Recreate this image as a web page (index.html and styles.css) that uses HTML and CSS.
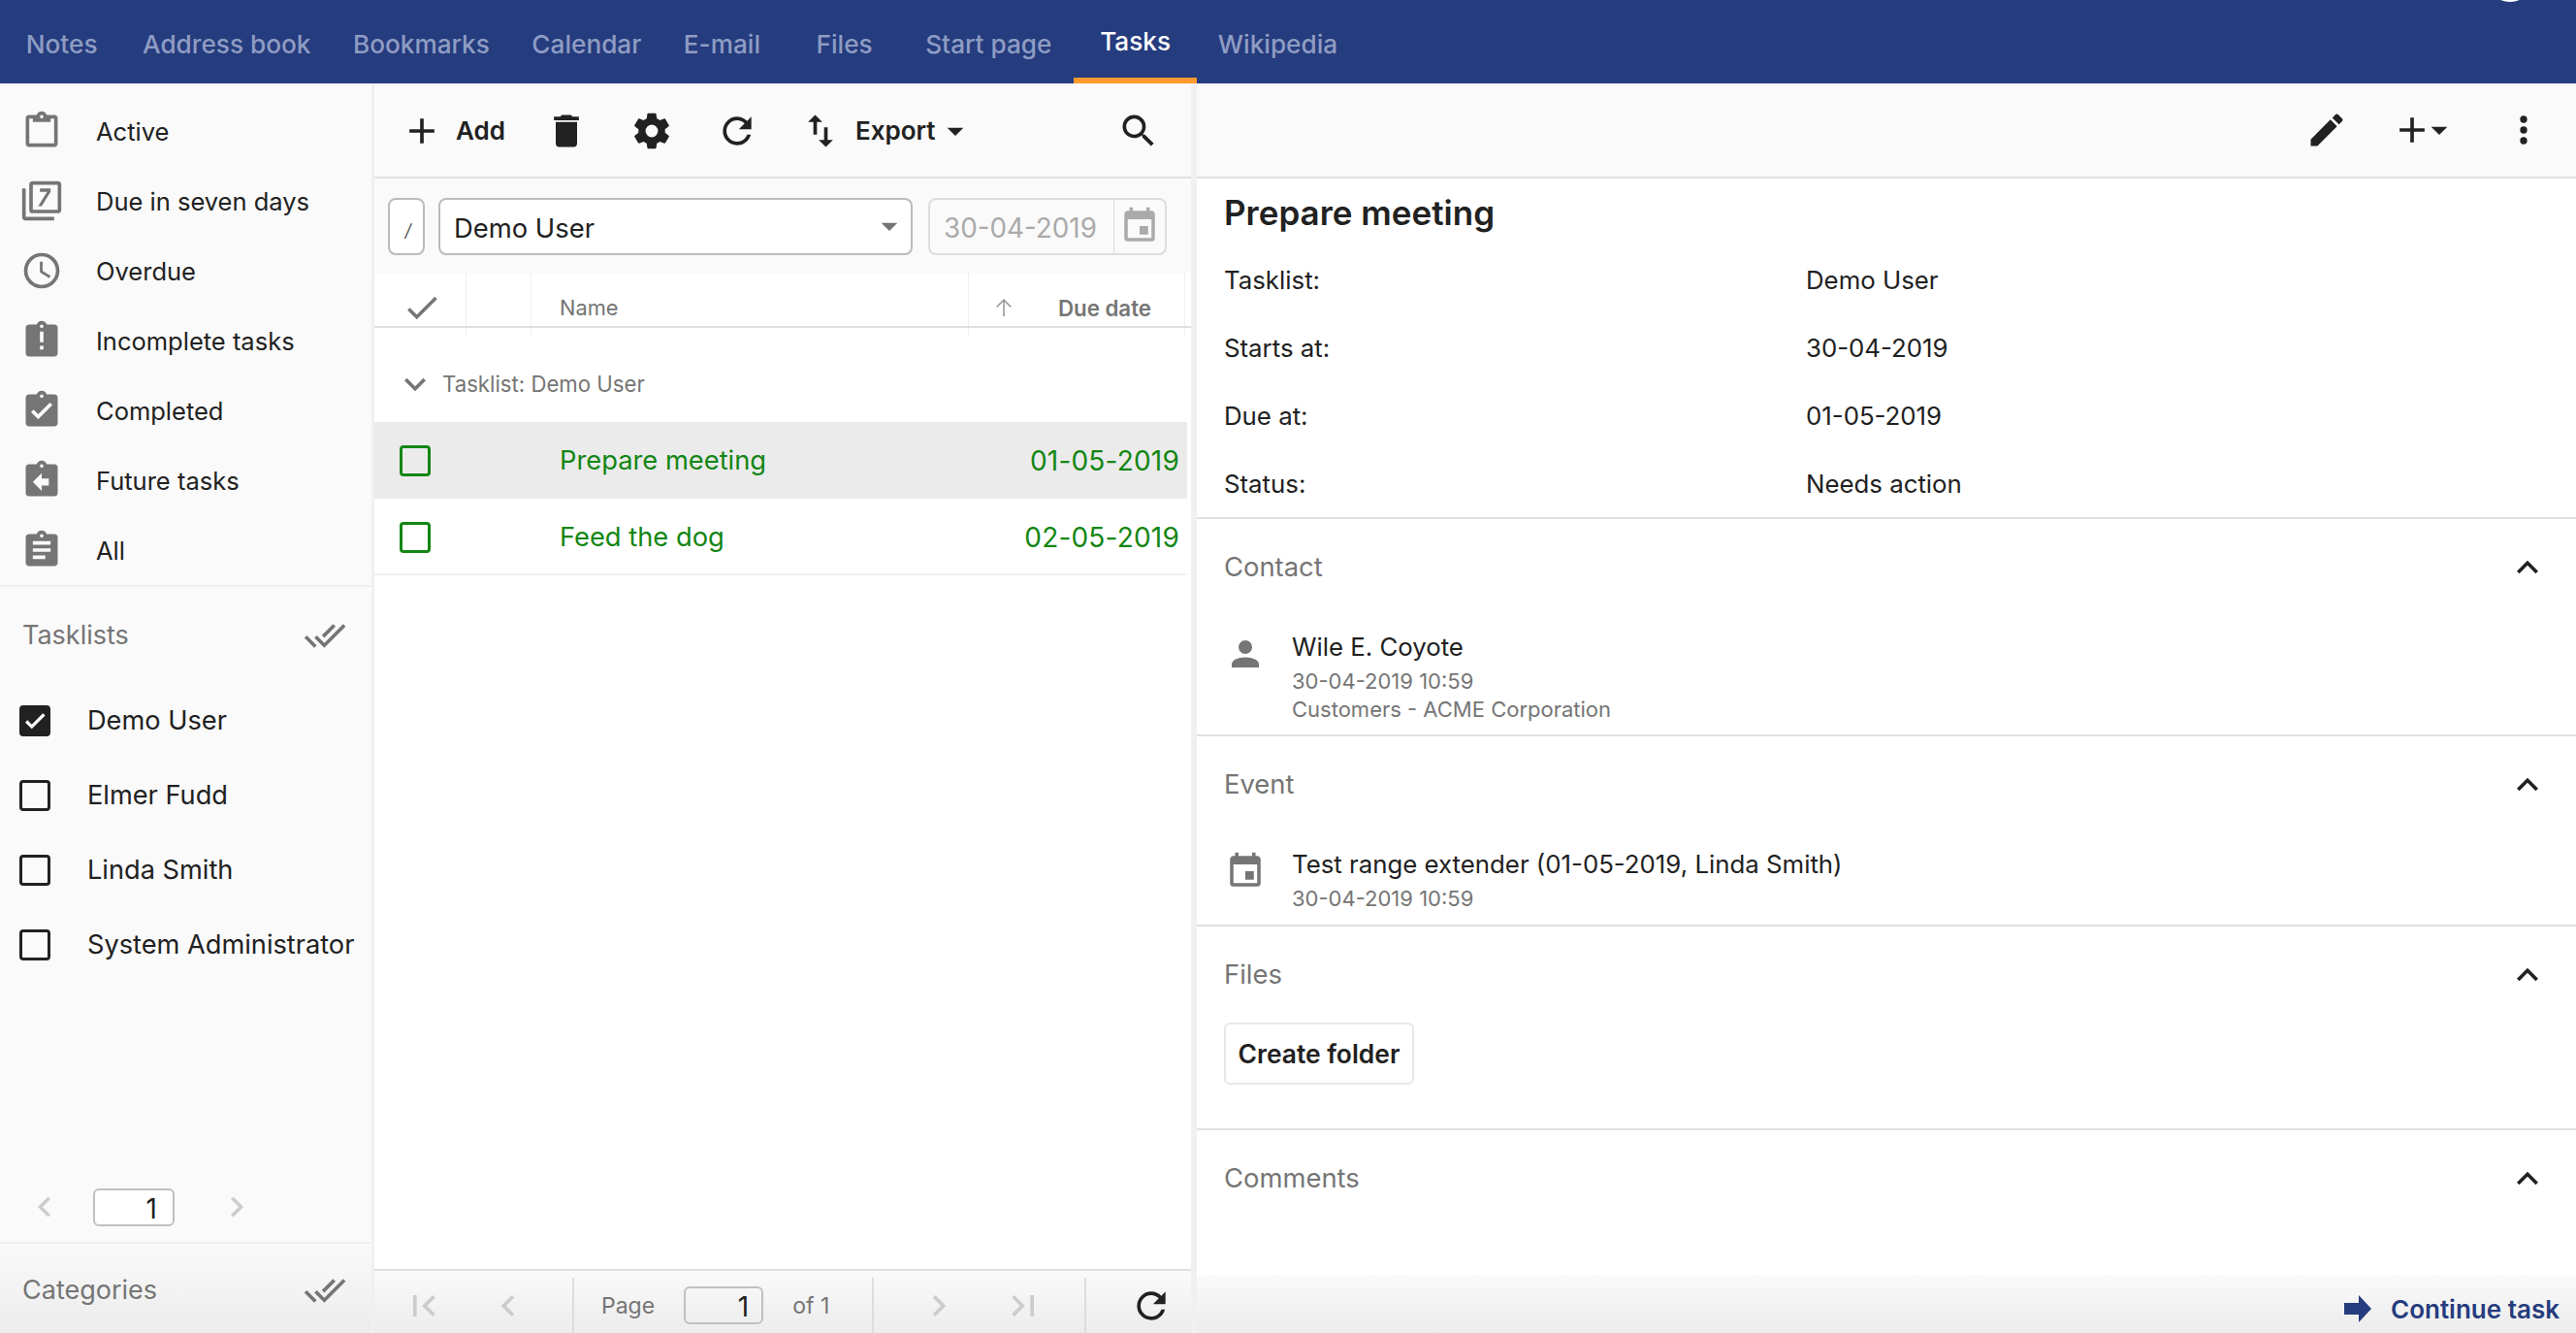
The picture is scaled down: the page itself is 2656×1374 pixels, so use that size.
FILE: index.html
```html
<!DOCTYPE html>
<html lang="en">
<head>
  <meta charset="UTF-8" />
  <title>Tasks</title>
  <link rel="stylesheet" href="styles.css">
</head>
<body>
  <!-- Icon set -->
  <svg class="defs" xmlns="http://www.w3.org/2000/svg">
    <symbol id="i-clip" viewBox="0 0 24 24"><path d="M19,3H14.82C14.4,1.84 13.3,1 12,1C10.7,1 9.6,1.84 9.18,3H5A2,2 0 0,0 3,5V19A2,2 0 0,0 5,21H19A2,2 0 0,0 21,19V5A2,2 0 0,0 19,3M12,3A1,1 0 0,1 13,4A1,1 0 0,1 12,5A1,1 0 0,1 11,4A1,1 0 0,1 12,3M7,7H17V5H19V19H5V5H7V7Z"/></symbol>
    <symbol id="i-seven" viewBox="0 0 24 24"><path d="M21,17V3H7V17H21M21,1A2,2 0 0,1 23,3V17A2,2 0 0,1 21,19H7A2,2 0 0,1 5,17V3A2,2 0 0,1 7,1H21M3,5V21H19V23H3A2,2 0 0,1 1,21V5H3M12,15L17,7V5H11V7H15L10,15H12Z"/></symbol>
    <symbol id="i-clock" viewBox="0 0 24 24"><path d="M12,2A10,10 0 0,0 2,12A10,10 0 0,0 12,22A10,10 0 0,0 22,12A10,10 0 0,0 12,2M12,20A8,8 0 1,1 20,12A8,8 0 0,1 12,20M12.5,7H11V13L16.2,16.2L17,14.9L12.5,12.2V7Z"/></symbol>
    <symbol id="i-clip-alert" viewBox="0 0 24 24"><path d="M19,3H14.82C14.4,1.84 13.3,1 12,1C10.7,1 9.6,1.84 9.18,3H5A2,2 0 0,0 3,5V19A2,2 0 0,0 5,21H19A2,2 0 0,0 21,19V5A2,2 0 0,0 19,3M13,17H11V15H13V17M13,13H11V7H13V13M12,5A1,1 0 0,1 11,4A1,1 0 0,1 12,3A1,1 0 0,1 13,4A1,1 0 0,1 12,5Z"/></symbol>
    <symbol id="i-clip-check" viewBox="0 0 24 24"><path d="M19,3H14.82C14.4,1.84 13.3,1 12,1C10.7,1 9.6,1.84 9.18,3H5A2,2 0 0,0 3,5V19A2,2 0 0,0 5,21H19A2,2 0 0,0 21,19V5A2,2 0 0,0 19,3M10,17L6,13L7.41,11.59L10,14.17L16.59,7.58L18,9L10,17M12,3A1,1 0 0,1 13,4A1,1 0 0,1 12,5A1,1 0 0,1 11,4A1,1 0 0,1 12,3Z"/></symbol>
    <symbol id="i-clip-left" viewBox="0 0 24 24"><path d="M19,3H14.82C14.4,1.84 13.3,1 12,1C10.7,1 9.6,1.84 9.18,3H5A2,2 0 0,0 3,5V19A2,2 0 0,0 5,21H19A2,2 0 0,0 21,19V5A2,2 0 0,0 19,3M16,15H12V18L7,13L12,8V11H16V15M12,3A1,1 0 0,1 13,4A1,1 0 0,1 12,5A1,1 0 0,1 11,4A1,1 0 0,1 12,3Z"/></symbol>
    <symbol id="i-clip-text" viewBox="0 0 24 24"><path d="M19,3H14.82C14.4,1.84 13.3,1 12,1C10.7,1 9.6,1.84 9.18,3H5A2,2 0 0,0 3,5V19A2,2 0 0,0 5,21H19A2,2 0 0,0 21,19V5A2,2 0 0,0 19,3M17,9H7V7H17V9M17,13H7V11H17V13M14,17H7V15H14V17M12,3A1,1 0 0,1 13,4A1,1 0 0,1 12,5A1,1 0 0,1 11,4A1,1 0 0,1 12,3Z"/></symbol>
    <symbol id="i-plus" viewBox="0 0 24 24"><path d="M19,13H13V19H11V13H5V11H11V5H13V11H19V13Z"/></symbol>
    <symbol id="i-delete" viewBox="0 0 24 24"><path d="M19,4H15.5L14.5,3H9.5L8.5,4H5V6H19M6,19A2,2 0 0,0 8,21H16A2,2 0 0,0 18,19V7H6V19Z"/></symbol>
    <symbol id="i-cog" viewBox="0 0 24 24"><path d="M12,15.5A3.5,3.5 0 0,1 8.5,12A3.5,3.5 0 0,1 12,8.5A3.5,3.5 0 0,1 15.5,12A3.5,3.5 0 0,1 12,15.5M19.43,12.97C19.47,12.65 19.5,12.33 19.5,12C19.5,11.67 19.47,11.34 19.43,11L21.54,9.37C21.73,9.22 21.78,8.95 21.66,8.73L19.66,5.27C19.54,5.05 19.27,4.96 19.05,5.05L16.56,6.05C16.04,5.66 15.5,5.32 14.87,5.07L14.5,2.42C14.46,2.18 14.25,2 14,2H10C9.75,2 9.54,2.18 9.5,2.42L9.13,5.07C8.5,5.32 7.96,5.66 7.44,6.05L4.95,5.05C4.73,4.96 4.46,5.05 4.34,5.27L2.34,8.73C2.21,8.95 2.27,9.22 2.46,9.37L4.57,11C4.53,11.34 4.5,11.67 4.5,12C4.5,12.33 4.53,12.65 4.57,12.97L2.46,14.63C2.27,14.78 2.21,15.05 2.34,15.27L4.34,18.73C4.46,18.95 4.73,19.03 4.95,18.95L7.44,17.94C7.96,18.34 8.5,18.68 9.13,18.93L9.5,21.58C9.54,21.82 9.75,22 10,22H14C14.25,22 14.46,21.82 14.5,21.58L14.87,18.93C15.5,18.67 16.04,18.34 16.56,17.94L19.05,18.95C19.27,19.03 19.54,18.95 19.66,18.73L21.66,15.27C21.78,15.05 21.73,14.78 21.54,14.63L19.43,12.97Z"/></symbol>
    <symbol id="i-refresh" viewBox="0 0 24 24"><path d="M17.65,6.35C16.2,4.9 14.21,4 12,4A8,8 0 0,0 4,12A8,8 0 0,0 12,20C15.73,20 18.84,17.45 19.73,14H17.65C16.83,16.33 14.61,18 12,18A6,6 0 0,1 6,12A6,6 0 0,1 12,6C13.66,6 15.14,6.69 16.22,7.78L13,11H20V4L17.65,6.35Z"/></symbol>
    <symbol id="i-swap" viewBox="0 0 24 24"><path d="M9,3L5,7H8V14H10V7H13M16,17V10H14V17H11L15,21L19,17H16Z"/></symbol>
    <symbol id="i-search" viewBox="0 0 24 24"><path d="M9.5,3A6.5,6.5 0 0,1 16,9.5C16,11.11 15.41,12.59 14.44,13.73L14.71,14H15.5L20.5,19L19,20.5L14,15.5V14.71L13.73,14.44C12.59,15.41 11.11,16 9.5,16A6.5,6.5 0 0,1 3,9.5A6.5,6.5 0 0,1 9.5,3M9.5,5C7,5 5,7 5,9.5C5,12 7,14 9.5,14C12,14 14,12 14,9.5C14,7 12,5 9.5,5Z"/></symbol>
    <symbol id="i-caret" viewBox="0 0 24 24"><path d="M7,10L12,15L17,10H7Z"/></symbol>
    <symbol id="i-calendar" viewBox="0 0 24 24"><path d="M19,19H5V8H19M16,1V3H8V1H6V3H5C3.89,3 3,3.89 3,5V19A2,2 0 0,0 5,21H19A2,2 0 0,0 21,19V5C21,3.89 20.1,3 19,3H18V1M17,12H12V17H17V12Z"/></symbol>
    <symbol id="i-check" viewBox="0 0 24 24"><path d="M21,7L9,19L3.5,13.5L4.91,12.09L9,16.17L19.59,5.59L21,7Z"/></symbol>
    <symbol id="i-check-all" viewBox="0 0 24 24"><path d="M0.41,13.41L6,19L7.41,17.58L1.83,12M22.24,5.58L11.66,16.17L7.5,12L6.07,13.41L11.66,19L23.66,7M18,7L16.59,5.58L10.24,11.93L11.66,13.34L18,7Z"/></symbol>
    <symbol id="i-left" viewBox="0 0 24 24"><path d="M15.41,16.58L10.83,12L15.41,7.41L14,6L8,12L14,18L15.41,16.58Z"/></symbol>
    <symbol id="i-right" viewBox="0 0 24 24"><path d="M8.59,16.58L13.17,12L8.59,7.41L10,6L16,12L10,18L8.59,16.58Z"/></symbol>
    <symbol id="i-first" viewBox="0 0 24 24"><path d="M18.41,16.59L13.82,12L18.41,7.41L17,6L11,12L17,18L18.41,16.59M6,6H8V18H6V6Z"/></symbol>
    <symbol id="i-last" viewBox="0 0 24 24"><path d="M5.59,7.41L10.18,12L5.59,16.59L7,18L13,12L7,6L5.59,7.41M16,6H18V18H16V6Z"/></symbol>
    <symbol id="i-up" viewBox="0 0 24 24"><path d="M7.41,15.41L12,10.83L16.59,15.41L18,14L12,8L6,14L7.41,15.41Z"/></symbol>
    <symbol id="i-down" viewBox="0 0 24 24"><path d="M7.41,8.58L12,13.17L16.59,8.58L18,10L12,16L6,10L7.41,8.58Z"/></symbol>
    <symbol id="i-arrow-up" viewBox="0 0 24 24"><path d="M12.8,21H11.2V6L5.3,11.9L4.2,10.8L12,3L19.8,10.8L18.7,11.9L12.8,6V21Z"/></symbol>
    <symbol id="i-pencil" viewBox="0 0 24 24"><path d="M20.71,7.04C21.1,6.65 21.1,6 20.71,5.63L18.37,3.29C18,2.9 17.35,2.9 16.96,3.29L15.12,5.12L18.87,8.87M3,17.25V21H6.75L17.81,9.93L14.06,6.18L3,17.25Z"/></symbol>
    <symbol id="i-dots" viewBox="0 0 24 24"><path d="M12,16A2,2 0 0,1 14,18A2,2 0 0,1 12,20A2,2 0 0,1 10,18A2,2 0 0,1 12,16M12,10A2,2 0 0,1 14,12A2,2 0 0,1 12,14A2,2 0 0,1 10,12A2,2 0 0,1 12,10M12,4A2,2 0 0,1 14,6A2,2 0 0,1 12,8A2,2 0 0,1 10,6A2,2 0 0,1 12,4Z"/></symbol>
    <symbol id="i-person" viewBox="0 0 24 24"><path d="M12,4A4,4 0 0,1 16,8A4,4 0 0,1 12,12A4,4 0 0,1 8,8A4,4 0 0,1 12,4M12,14C16.42,14 20,15.79 20,18V20H4V18C4,15.79 7.58,14 12,14Z"/></symbol>
    <symbol id="i-forward" viewBox="0 0 28 28"><path d="M0,8H15V0L28,14L15,28V20H0Z"/></symbol>
  </svg>

  <nav class="topnav">
    <a class="tab tab-first">Notes</a>
    <a class="tab">Address book</a>
    <a class="tab">Bookmarks</a>
    <a class="tab">Calendar</a>
    <a class="tab">E-mail</a>
    <a class="tab tab-wide">Files</a>
    <a class="tab">Start page</a>
    <a class="tab active">Tasks</a>
    <a class="tab">Wikipedia</a>
    <span class="avatar"></span>
  </nav>

  <div class="app">
    <aside class="sidebar">
      <ul class="filters">
        <li><svg class="ico-filter"><use href="#i-clip"/></svg>Active</li>
        <li><svg class="ico-filter"><use href="#i-seven"/></svg>Due in seven days</li>
        <li><svg class="ico-filter"><use href="#i-clock"/></svg>Overdue</li>
        <li><svg class="ico-filter"><use href="#i-clip-alert"/></svg>Incomplete tasks</li>
        <li><svg class="ico-filter"><use href="#i-clip-check"/></svg>Completed</li>
        <li><svg class="ico-filter"><use href="#i-clip-left"/></svg>Future tasks</li>
        <li><svg class="ico-filter"><use href="#i-clip-text"/></svg>All</li>
      </ul>

      <div class="side-head">
        <span>Tasklists</span>
        <svg class="ico-all"><use href="#i-check-all"/></svg>
      </div>
      <ul class="lists">
        <li><span class="box checked"><svg><use href="#i-check"/></svg></span>Demo User</li>
        <li><span class="box"></span>Elmer Fudd</li>
        <li><span class="box"></span>Linda Smith</li>
        <li><span class="box"></span>System Administrator</li>
      </ul>
      <div class="side-pager">
        <svg class="ico-pager"><use href="#i-left"/></svg>
        <span class="page-input">1</span>
        <svg class="ico-pager"><use href="#i-right"/></svg>
      </div>
      <div class="side-head side-foot">
        <span>Categories</span>
        <svg class="ico-all"><use href="#i-check-all"/></svg>
      </div>
    </aside>

    <main class="tasks">
      <div class="toolbar">
        <button class="tool tool-add"><svg><use href="#i-plus"/></svg>Add</button>
        <button class="tool tool-delete"><svg><use href="#i-delete"/></svg></button>
        <button class="tool tool-cog"><svg><use href="#i-cog"/></svg></button>
        <button class="tool tool-refresh"><svg><use href="#i-refresh"/></svg></button>
        <button class="tool tool-export"><svg class="swap"><use href="#i-swap"/></svg>Export<svg class="caret"><use href="#i-caret"/></svg></button>
        <button class="tool tool-search"><svg><use href="#i-search"/></svg></button>
      </div>

      <div class="filter-row">
        <span class="field field-stub">/</span>
        <span class="field field-select"><span class="select-text">Demo User</span><svg class="caret"><use href="#i-caret"/></svg></span>
        <span class="field field-date"><span class="date-text">30-04-2019</span><span class="date-btn"><svg><use href="#i-calendar"/></svg></span></span>
      </div>

      <div class="thead">
        <span class="th th-check"><svg><use href="#i-check"/></svg></span>
        <span class="th th-gap"></span>
        <span class="th th-name">Name</span>
        <span class="th th-sort"><svg><use href="#i-arrow-up"/></svg></span>
        <span class="th th-due">Due date</span>
      </div>

      <div class="tbody">
        <div class="group"><svg><use href="#i-down"/></svg>Tasklist: Demo User</div>
        <div class="row selected">
          <span class="row-box"></span>
          <span class="row-name">Prepare meeting</span>
          <span class="row-date">01-05-2019</span>
        </div>
        <div class="row">
          <span class="row-box"></span>
          <span class="row-name">Feed the dog</span>
          <span class="row-date">02-05-2019</span>
        </div>
      </div>

      <div class="pager">
        <div class="pager-part part-back">
          <svg><use href="#i-first"/></svg>
          <svg><use href="#i-left"/></svg>
        </div>
        <div class="pager-part part-page">
          <span>Page</span>
          <span class="page-input">1</span>
          <span>of 1</span>
        </div>
        <div class="pager-part part-next">
          <svg><use href="#i-right"/></svg>
          <svg><use href="#i-last"/></svg>
        </div>
        <div class="pager-part part-reload">
          <svg><use href="#i-refresh"/></svg>
        </div>
      </div>
    </main>

    <section class="detail">
      <div class="detail-bar">
        <svg class="bar-edit"><use href="#i-pencil"/></svg>
        <span class="bar-add"><svg class="plus"><use href="#i-plus"/></svg><svg class="caret"><use href="#i-caret"/></svg></span>
        <svg class="bar-more"><use href="#i-dots"/></svg>
      </div>

      <div class="detail-body">
        <div class="summary">
          <h2>Prepare meeting</h2>
          <dl class="props">
            <dt>Tasklist:</dt><dd>Demo User</dd>
            <dt>Starts at:</dt><dd>30-04-2019</dd>
            <dt>Due at:</dt><dd>01-05-2019</dd>
            <dt>Status:</dt><dd>Needs action</dd>
          </dl>
        </div>

        <div class="panel panel-contact">
          <div class="panel-head">Contact<svg><use href="#i-up"/></svg></div>
          <div class="linked">
            <svg class="linked-ico ico-person"><use href="#i-person"/></svg>
            <div>
              <div class="linked-title">Wile E. Coyote</div>
              <div class="linked-meta">30-04-2019 10:59</div>
              <div class="linked-meta">Customers - ACME Corporation</div>
            </div>
          </div>
        </div>

        <div class="panel panel-event">
          <div class="panel-head">Event<svg><use href="#i-up"/></svg></div>
          <div class="linked">
            <svg class="linked-ico"><use href="#i-calendar"/></svg>
            <div>
              <div class="linked-title">Test range extender (01-05-2019, Linda Smith)</div>
              <div class="linked-meta">30-04-2019 10:59</div>
            </div>
          </div>
        </div>

        <div class="panel panel-files">
          <div class="panel-head">Files<svg><use href="#i-up"/></svg></div>
          <button class="btn-folder">Create folder</button>
        </div>

        <div class="panel panel-comments">
          <div class="panel-head">Comments<svg><use href="#i-up"/></svg></div>
        </div>
      </div>

      <div class="detail-foot">
        <a class="continue"><svg><use href="#i-forward"/></svg>Continue task</a>
      </div>
    </section>
  </div>
</body>
</html>
```

FILE: styles.css
```css
* {
  box-sizing: border-box;
}

html, body {
  height: 100%;
}

body {
  margin: 0;
  display: flex;
  flex-direction: column;
  overflow: hidden;
  font-family: 'Inter', 'Liberation Sans', sans-serif;
  font-size: 24px;
  color: #212121;
  background: #fff;
}

ul {
  margin: 0;
  padding: 0;
  list-style: none;
}

button {
  font-family: inherit;
  background: none;
  border: none;
  padding: 0;
}

svg {
  fill: currentColor;
  flex: none;
}

.defs {
  display: none;
}

/* Top navigation */
.topnav {
  position: relative;
  flex: none;
  display: flex;
  height: 86px;
  padding-left: 5px;
  background: #253c7e;
}

.tab {
  display: flex;
  align-items: center;
  height: 86px;
  padding: 4px 21.75px 0;
  font-size: 26.2px;
  font-weight: 500;
  color: #8f9cc3;
}

.tab-first {
  margin-right: 3px;
}

.tab-wide {
  margin-left: 14px;
  margin-right: 11px;
}

.tab.active {
  margin-left: 1px;
  padding: 4px 27px 0;
  color: #fff;
  border-bottom: 6px solid #ff9a2e;
}

.avatar {
  position: absolute;
  top: -46px;
  left: 2564px;
  width: 48px;
  height: 48px;
  border-radius: 50%;
  background: #fff;
}

/* Layout */
.app {
  flex: 1;
  display: flex;
  min-height: 0;
}

.sidebar {
  flex: none;
  display: flex;
  flex-direction: column;
  width: 386px;
  background: #fafafa;
  border-right: 3px solid #f0f0f0;
}

.tasks {
  flex: none;
  display: flex;
  flex-direction: column;
  width: 842px;
  background: #fff;
}

.detail {
  flex: 1;
  display: flex;
  flex-direction: column;
  min-width: 0;
  background: #fff;
  border-left: 6px solid #f0f0f0;
}

/* Sidebar */
.filters {
  padding: 13px 0 0;
  border-bottom: 2px solid #f0f0f0;
  height: 519px;
}

.filters li {
  display: flex;
  align-items: center;
  height: 72px;
  padding-left: 21px;
  font-size: 25.5px;
}

.ico-filter {
  width: 44px;
  height: 44px;
  margin-right: 34px;
  color: #757575;
}

.side-head {
  flex: none;
  display: flex;
  align-items: center;
  justify-content: space-between;
  height: 99px;
  padding: 0 26px 0 23px;
  font-size: 27px;
  color: #757575;
}

.ico-all {
  width: 44px;
  height: 44px;
}

.lists {
  flex: 1;
}

.lists li {
  display: flex;
  align-items: center;
  height: 77px;
  padding-left: 20px;
  font-size: 27.2px;
}

.box {
  flex: none;
  display: flex;
  align-items: center;
  justify-content: center;
  width: 32px;
  height: 32px;
  margin-right: 38px;
  border: 3.5px solid #212121;
  border-radius: 4px;
}

.box.checked {
  background: #212121;
  color: #fff;
}

.box svg {
  width: 26px;
  height: 26px;
  stroke: currentColor;
  stroke-width: 1;
}

.side-pager {
  flex: none;
  display: flex;
  align-items: center;
  height: 72px;
  padding-left: 25px;
  color: #ccc;
}

.ico-pager {
  width: 42px;
  height: 42px;
}

.page-input {
  display: block;
  height: 39px;
  padding: 0 16px 0 0;
  line-height: 39px;
  font-size: 28px;
  text-align: right;
  color: #212121;
  background: #fff;
  border: 2px solid #c0c0c0;
  border-radius: 6px;
}

.side-pager .page-input {
  width: 84px;
  margin: 0 43px 0 29px;
}

.side-foot {
  flex: none;
  height: 94px;
  padding-top: 3px;
  border-top: 2px solid #f0f0f0;
  background: linear-gradient(#fafafa, #ececec);
}

/* Task list toolbar */
.toolbar {
  flex: none;
  display: flex;
  align-items: center;
  height: 98px;
  padding-top: 1px;
  background: #fafafa;
  border-bottom: 2px solid #e0e0e0;
}

.tool {
  display: flex;
  align-items: center;
  font-size: 26px;
  font-weight: 600;
  color: #212121;
}

.tool svg {
  width: 44px;
  height: 44px;
}

.tool-add {
  margin-left: 27px;
  gap: 13px;
}

.tool-delete {
  margin-left: 41px;
}

.tool-cog {
  margin-left: 44px;
}

.tool-refresh {
  margin-left: 44px;
}

.tool-export {
  margin-left: 42px;
  gap: 14px;
}

.tool-export .caret {
  width: 40px;
  height: 40px;
  margin-left: -13.5px;
}

.tool-search {
  margin-left: auto;
  margin-right: 32px;
}

/* Filter row */
.filter-row {
  flex: none;
  display: flex;
  align-items: center;
  gap: 14px;
  height: 98px;
  padding: 0 0 0 14px;
  background: #fafafa;
}

.field {
  display: flex;
  align-items: center;
  height: 59px;
  background: #fff;
  border: 2px solid #bbb;
  border-radius: 8px;
}

.field-stub {
  width: 38px;
  justify-content: flex-end;
  padding: 8px 12px 0 0;
  font-size: 18px;
  font-style: italic;
  color: #555;
}

.field-select {
  justify-content: space-between;
  width: 489px;
  padding: 0 2px 0 14px;
  font-size: 27.4px;
}

.select-text {
  padding-top: 3px;
}

.field-select .caret {
  width: 40px;
  height: 40px;
  color: #757575;
}

.field-date {
  width: 246px;
  margin-left: 2px;
  background: #fafafa;
  border-color: #ddd;
  font-size: 27.8px;
  color: #aaa;
}

.date-text {
  flex: 1;
  padding: 4px 0 0 14px;
}

.date-btn {
  display: flex;
  align-items: center;
  justify-content: center;
  width: 53px;
  height: 100%;
  border-left: 1px solid #ddd;
}

.date-btn svg {
  width: 42px;
  height: 42px;
}

/* Table */
.thead {
  position: relative;
  flex: none;
  display: flex;
  height: 64px;
  font-size: 21.8px;
  color: #757575;
}

.thead::after {
  content: "";
  position: absolute;
  top: 54px;
  left: 0;
  right: 0;
  height: 2px;
  background: #e0e0e0;
}

.th {
  display: flex;
  align-items: center;
  height: 64px;
  padding-top: 6px;
  border-right: 1px solid #f0f0f0;
}

.th-check {
  width: 95px;
  justify-content: center;
  padding-left: 3px;
  color: #757575;
}

.th-check svg {
  width: 42px;
  height: 42px;
}

.th-gap {
  width: 67px;
}

.th-name {
  width: 451px;
  padding-left: 29px;
}

.th-sort {
  width: 70px;
  padding-left: 24px;
  border: none;
  color: #999;
}

.th-sort svg {
  width: 24px;
  height: 24px;
}

.th-due {
  width: 153px;
  justify-content: flex-end;
  padding-right: 34px;
  font-size: 22.3px;
  font-weight: 600;
}

.tbody {
  flex: 1;
  padding-right: 4px;
}

.group {
  display: flex;
  align-items: center;
  height: 89px;
  padding: 10px 0 0 20px;
  font-size: 22.2px;
  color: #757575;
}

.group svg {
  width: 44px;
  height: 44px;
  margin-right: 6px;
}

.row {
  display: flex;
  align-items: center;
  height: 79px;
  padding: 2px 8px 0 26px;
  font-size: 27.3px;
  color: #138613;
  border-bottom: 2px solid #f0f0f0;
}

.row.selected {
  padding-top: 0;
  background: #ebebeb;
  border-bottom: none;
}

.row-box {
  flex: none;
  width: 32px;
  height: 32px;
  margin-right: 133px;
  border: 3.5px solid #138613;
  border-radius: 4px;
}

.row-name {
  flex: 1;
}

.row-date {
  font-size: 28px;
  letter-spacing: 0.2px;
}

/* Bottom pager */
.pager {
  flex: none;
  display: flex;
  height: 66px;
  padding-top: 7px;
  font-size: 23px;
  color: #757575;
  border-top: 2px solid #e0e0e0;
  background: linear-gradient(#fafafa, #ececec);
}

.pager-part {
  display: flex;
  align-items: center;
  border-right: 2px solid #ddd;
}

.pager-part svg {
  width: 44px;
  height: 44px;
  color: #ccc;
}

.part-back {
  width: 206px;
  padding-left: 29px;
  gap: 43px;
}

.part-page {
  width: 309px;
  padding-left: 28px;
  gap: 30px;
}

.part-page .page-input {
  width: 82px;
  padding-right: 13px;
  background: transparent;
}

.part-next {
  width: 219px;
  padding-left: 45px;
  gap: 43px;
}

.part-reload {
  flex: 1;
  padding-left: 45px;
  border: none;
}

.part-reload svg {
  color: #212121;
}

/* Detail pane */
.detail-bar {
  position: relative;
  flex: none;
  display: flex;
  align-items: center;
  height: 98px;
  background: #fafafa;
  border-bottom: 2px solid #e0e0e0;
}

.bar-edit {
  width: 44px;
  height: 44px;
  margin-left: 1143px;
}

.bar-add {
  display: flex;
  align-items: center;
  margin-left: 44px;
}

.bar-add .plus {
  width: 44px;
  height: 44px;
}

.bar-add .caret {
  width: 40px;
  height: 40px;
  margin-left: -14px;
}

.bar-more {
  width: 44px;
  height: 44px;
  margin-left: 45px;
}

.detail-body {
  flex: 1;
  min-height: 0;
}

.summary {
  height: 351px;
  padding: 0 28px;
  border-bottom: 2px solid #e0e0e0;
}

.summary h2 {
  margin: 0;
  padding-top: 13px;
  height: 69px;
  line-height: 44px;
  font-size: 35px;
  font-weight: 600;
}

.props {
  display: grid;
  grid-template-columns: 600px 1fr;
  grid-auto-rows: 70px;
  align-items: center;
  margin: 0;
  font-size: 25.8px;
}

.props dd {
  margin: 0;
}

.panel-head {
  display: flex;
  align-items: center;
  justify-content: space-between;
  height: 97px;
  padding: 0 28px 0 28px;
  font-size: 27.4px;
  color: #757575;
}

.panel-head svg {
  width: 44px;
  height: 44px;
  margin-top: 3px;
  color: #212121;
}

.panel {
  border-bottom: 2px solid #e0e0e0;
}

.panel-contact {
  height: 224px;
}

.panel-event {
  height: 196px;
}

.panel-files {
  height: 210px;
}

.panel-comments {
  border: none;
}

.linked {
  display: flex;
  padding: 18px 0 0 29px;
  margin-top: -2px;
}

.linked-ico {
  width: 42px;
  height: 42px;
  margin: 5px 27px 0 0;
  color: #757575;
}

.linked-title {
  height: 39.5px;
  line-height: 38px;
  font-size: 25.8px;
}

.linked-meta {
  height: 29px;
  line-height: 29px;
  font-size: 22px;
  color: #757575;
}

.btn-folder {
  display: block;
  width: 196px;
  height: 64px;
  margin: 2px 0 0 28px;
  font-size: 26.4px;
  font-weight: 600;
  color: #212121;
  background: #fff;
  border: 2px solid #e8e8e8;
  border-radius: 6px;
}

.detail-foot {
  flex: none;
  display: flex;
  justify-content: flex-end;
  align-items: center;
  height: 60px;
  padding: 10px 17px 0 0;
  background: linear-gradient(#fafafa, #ececec);
}

.continue {
  display: flex;
  align-items: center;
  gap: 20px;
  font-size: 26px;
  font-weight: 600;
  color: #253c7e;
}

.continue svg {
  width: 28px;
  height: 28px;
}
```
